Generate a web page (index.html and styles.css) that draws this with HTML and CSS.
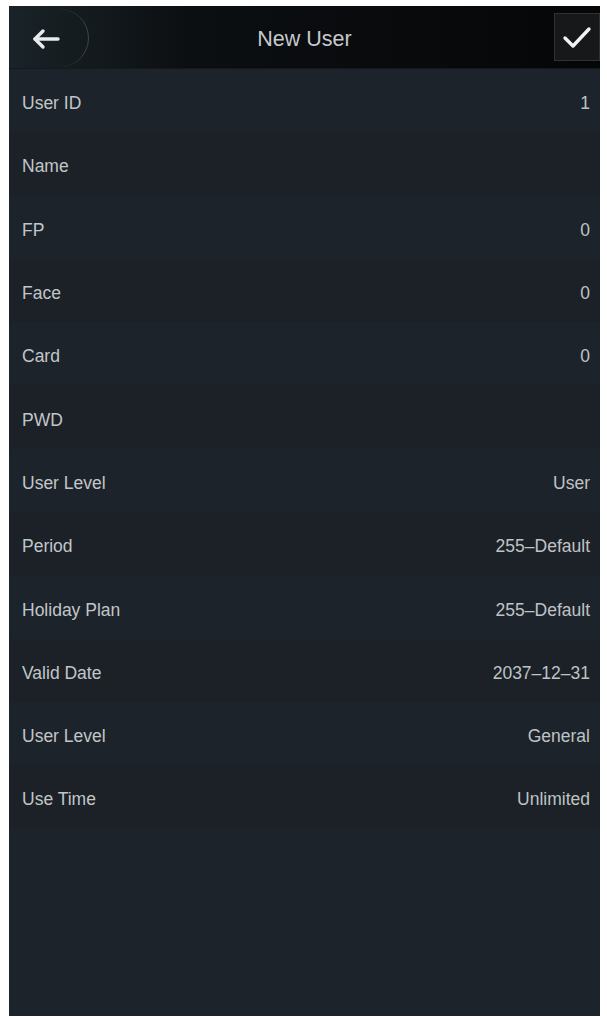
FILE: index.html
```html
<!DOCTYPE html>
<html lang="en">
<head>
    <meta charset="UTF-8">
    <meta name="viewport" content="width=device-width, initial-scale=1.0">
    <title>New User</title>
    <link rel="stylesheet" href="styles.css">
</head>
<body>
    <div class="screen">
        <header class="topbar">
            <button class="back-btn" aria-label="Back">
                <svg width="30" height="24" viewBox="0 0 30 24" fill="none" stroke="currentColor" stroke-width="3.4" stroke-linecap="round" stroke-linejoin="round">
                    <line x1="4" y1="12" x2="27" y2="12"></line>
                    <polyline points="12 4 4 12 12 20"></polyline>
                </svg>
            </button>
            <h1>New User</h1>
            <button class="ok-btn" aria-label="Save">
                <svg width="30" height="26" viewBox="0 0 30 26" fill="none" stroke="currentColor" stroke-width="3.4" stroke-linecap="round" stroke-linejoin="round">
                    <polyline points="3 14 11 22 27 5"></polyline>
                </svg>
            </button>
        </header>

        <ul class="fields">
            <li><span>User ID</span><span class="value">1</span></li>
            <li><span>Name</span><span class="value"></span></li>
            <li><span>FP</span><span class="value">0</span></li>
            <li><span>Face</span><span class="value">0</span></li>
            <li><span>Card</span><span class="value">0</span></li>
            <li><span>PWD</span><span class="value"></span></li>
            <li><span>User Level</span><span class="value">User</span></li>
            <li><span>Period</span><span class="value">255–Default</span></li>
            <li><span>Holiday Plan</span><span class="value">255–Default</span></li>
            <li><span>Valid Date</span><span class="value">2037–12–31</span></li>
            <li><span>User Level</span><span class="value">General</span></li>
            <li><span>Use Time</span><span class="value">Unlimited</span></li>
        </ul>
    </div>
</body>
</html>
```

FILE: styles.css
```css
:root {
    --bg-color: #1d232a;
    --bar-color: #0b0e11;
    --text-color: #c2c6c9;
}

body {
    margin: 0;
    background-color: #fff;
    font-family: 'Liberation Sans', Arial, sans-serif;
}

.screen {
    margin: 6px 7px 2px 9px;
    height: 1010px;
    background-color: var(--bg-color);
    color: var(--text-color);
    display: flex;
    flex-direction: column;
    overflow: hidden;
}

.topbar {
    height: 62px;
    display: grid;
    grid-template-columns: 1fr auto 1fr;
    align-items: center;
    background: linear-gradient(90deg, #1a2328 0%, #0c0f12 30%, #050607 100%);
    border-bottom: 1px solid #151a1f;
}

.topbar h1 {
    margin: 0;
    padding-top: 5px;
    font-size: 21.5px;
    font-weight: normal;
    letter-spacing: 0;
    color: #c6c9cc;
}

.back-btn {
    justify-self: start;
    width: 80px;
    height: 58px;
    margin-top: 2px;
    padding: 2px 0 0 22px;
    display: flex;
    align-items: center;
    border: none;
    border-right: 1.5px solid #3c4850;
    border-radius: 0 30px 30px 0;
    background: transparent;
    color: #e8ecee;
}

.ok-btn {
    justify-self: end;
    width: 46px;
    height: 48px;
    padding: 0;
    display: flex;
    align-items: center;
    justify-content: center;
    border: 1px solid #2e3033;
    background-color: #16181a;
    color: #f2f2f2;
}

.fields {
    list-style: none;
    margin: 0;
    padding: 0;
}

.fields li {
    box-sizing: border-box;
    height: 63.3px;
    padding: 6px 10px 0 13px;
    display: flex;
    align-items: center;
    justify-content: space-between;
    font-size: 17.5px;
    letter-spacing: 0;
}

.fields li:nth-child(even) {
    background-color: #1b2127;
}

.value {
    color: #bfc3c6;
}
```
